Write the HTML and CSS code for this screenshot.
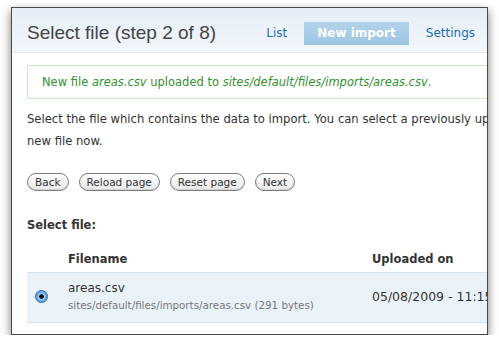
FILE: index.html
```html
<!DOCTYPE html>
<html lang="en">
<head>
  <meta charset="UTF-8">
  <title>Select file (step 2 of 8)</title>
  <link rel="stylesheet" href="styles.css">
</head>
<body>

  <!-- Window -->
  <div class="window">

    <!-- Header with tabs -->
    <div class="header">
      <h1>Select file (step 2 of 8)</h1>
      <ul class="tabs">
        <li><a href="#">List</a></li>
        <li class="active"><a href="#">New import</a></li>
        <li><a href="#">Settings</a></li>
      </ul>
    </div>

    <div class="content">
      <div class="messages">
        New file <em>areas.csv</em> uploaded to <em>sites/default/files/imports/areas.csv</em>.
      </div>

      <p class="intro">Select the file which contains the data to import. You can select a previously uploaded file, or upload a new file now.</p>

      <div class="buttons">
        <button class="form-button">Back</button>
        <button class="form-button">Reload page</button>
        <button class="form-button">Reset page</button>
        <button class="form-button">Next</button>
      </div>

      <div class="label">Select file:</div>

      <table class="files">
        <thead>
          <tr>
            <th class="col-radio"></th>
            <th class="col-name">Filename</th>
            <th>Uploaded on</th>
          </tr>
        </thead>
        <tbody>
          <tr>
            <td class="col-radio"><span class="radio"></span></td>
            <td class="col-name">
              <div class="file-name">areas.csv</div>
              <div class="file-path">sites/default/files/imports/areas.csv (291 bytes)</div>
            </td>
            <td class="date">05/08/2009 - 11:15</td>
          </tr>
        </tbody>
      </table>
    </div>
  </div>

</body>
</html>
```

FILE: styles.css
```css
/* General Styles */
body {
  font-family: "DejaVu Sans", Verdana, sans-serif;
  background: #ffffff;
  margin: 0;
  padding: 7px 11px 0 11px;
  color: #333333;
}

/* Window frame */
.window {
  width: 475px;
  height: 326px;
  border: 1px solid #4a4a4a;
  background: #ffffff;
  overflow: hidden;
  box-shadow: 0 4px 9px rgba(0, 0, 0, 0.55);
}

/* Header */
.header {
  display: flex;
  align-items: center;
  height: 44px;
  padding: 0 0 0 15px;
  background: linear-gradient(#e4edf7, #f3f7fb);
  border-bottom: 1px solid #e2e8ee;
}

h1 {
  margin: 6px 0 0 0;
  font-family: "Liberation Sans", Arial, sans-serif;
  font-weight: normal;
  font-size: 19px;
  color: #444444;
  flex: 1;
  white-space: nowrap;
}

.tabs {
  display: flex;
  list-style: none;
  margin: 7px 0 0 0;
  padding: 0;
}

.tabs a {
  display: block;
  padding: 4px 12px;
  font-size: 12px;
  color: #1f6fb5;
  text-decoration: none;
  line-height: 15px;
}

.tabs .active a {
  background: linear-gradient(#b4d3ea, #9cc5e4);
  color: #ffffff;
  font-weight: bold;
  padding: 4px 13px;
  margin: 0 5px;
}

/* Content */
.content {
  width: 700px;
  padding: 12px 0 0 15px;
  font-size: 12px;
}

.messages {
  border: 1px solid #c6ecc0;
  background: #ffffff;
  color: #33902f;
  padding: 9px 14px;
  font-size: 11.5px;
  line-height: 14px;
}

.intro {
  width: 620px;
  margin: 9px 0 0 0;
  line-height: 22px;
  font-size: 11.6px;
}

/* Buttons */
.buttons {
  display: flex;
  gap: 10px;
  margin-top: 21px;
}

.form-button {
  font-family: "DejaVu Sans", Verdana, sans-serif;
  font-size: 10.5px;
  color: #333333;
  height: 18px;
  padding: 0 7px;
  border: 1px solid #7d7d7d;
  border-radius: 9px;
  background: linear-gradient(#ffffff, #e8e8e8);
  box-shadow: inset 0 -1px 1px rgba(0, 0, 0, 0.1);
  line-height: 15px;
}

.label {
  font-weight: bold;
  font-size: 11.5px;
  line-height: 14px;
  margin-top: 27px;
}

/* Files table */
.files {
  border-collapse: collapse;
  margin-top: 8px;
  width: 560px;
}

.files th {
  text-align: left;
  font-size: 11.5px;
  line-height: 14px;
  padding: 12px 0 6px 0;
  border-bottom: 1px solid #d3e3ef;
}

.files td {
  background: #eaf2f9;
  border-bottom: 1px solid #d3e3ef;
  padding: 6px 0 9px 0;
  vertical-align: middle;
}

.col-radio {
  width: 41px;
  padding-left: 0;
}

.col-name {
  width: 304px;
}

.radio {
  display: block;
  width: 11px;
  height: 11px;
  margin-left: 8px;
  border-radius: 50%;
  border: 1px solid #3a6fa8;
  background: radial-gradient(circle, #111111 0 2px, #9fd0f8 2.5px, #3f8fdc 6px);
}

.file-name {
  font-size: 12px;
  line-height: 18px;
}

.file-path {
  font-size: 10.3px;
  color: #777777;
  line-height: 16px;
}

.date {
  font-size: 12.5px;
  padding-top: 4px;
}
```
